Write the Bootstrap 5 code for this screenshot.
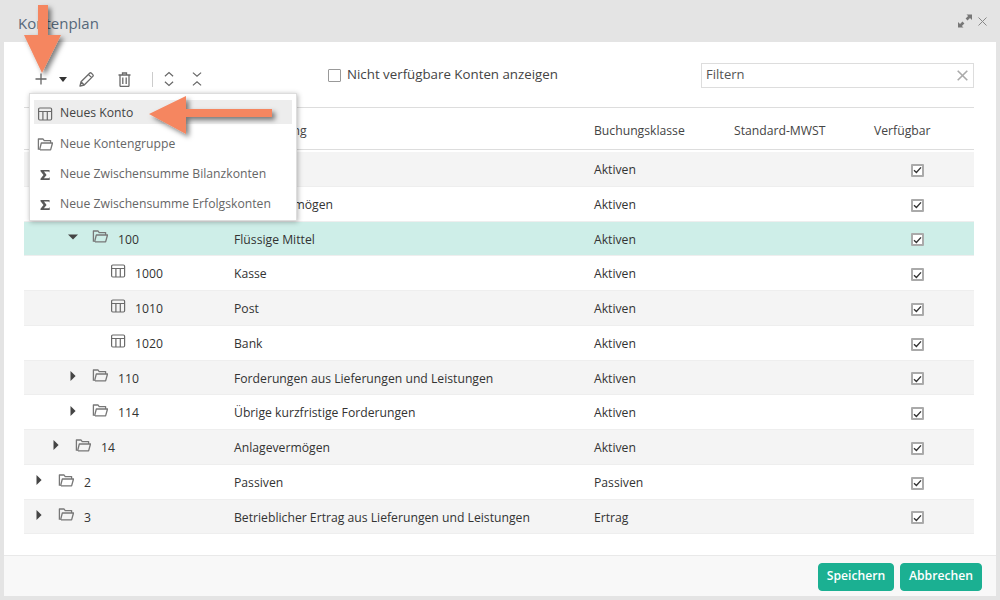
<!DOCTYPE html>
<html lang="de">
  <head>
    <meta charset="UTF-8" />
    <meta name="viewport" content="width=device-width, initial-scale=1.0" />
    <title>Kontenplan</title>
    <link rel="stylesheet" href="https://cdn.jsdelivr.net/npm/bootstrap@5.3.0/dist/css/bootstrap.min.css" />
    <style>
      html, body { height: 100%; overflow: hidden; }
      body {
        background: #e4e4e4;
        color: #333;
        font-family: "Open Sans", "Noto Sans", sans-serif;
        font-size: 12.2px;
        position: relative;
      }
      .win-head { height: 42px; padding: 0 13px 0 18px; }
      .win-title { font-size: 15px; color: #56687a; margin-top: 4px; }
      .win-ctrl { gap: 6px; }
      .win-body { height: 513px; margin: 0 4px; background: #fff; padding: 0 20px; position: relative; }
      .win-foot { height: 41px; margin: 0 4px; background: #f8f8f8; border-top: 1px solid #e9e9e9; padding: 1px 14px 0 0; gap: 6px; }
      .tools { height: 65px; padding-top: 1px; }
      .tool { width: 20px; display: flex; justify-content: center; flex: none; color: #666; margin-top: 8px; }
      .tool-plus { margin-left: 7px; }
      .tool-caret { margin-left: 2px; }
      .tool-pen { margin-left: 3px; }
      .tool-bin { margin-left: 18px; }
      .tool-up { margin-left: 6px; }
      .tool-down { margin-left: 8px; }
      .tool-sep { width: 1px; height: 15px; background: #ccc; flex: none; margin-left: 18px; margin-top: 8px; }
      .show-all { font-size: 13.3px; color: #444; margin-left: 121px; gap: 6px; }
      .fake-check { width: 13px; height: 13px; border: 2px solid #aaa; background: #fff; display: inline-flex; align-items: center; justify-content: center; border-radius: 1px; vertical-align: middle; }
      .show-all .fake-check { border-width: 1px; border-color: #999; }
      .filter-box { width: 273px; height: 25px; border: 1px solid #ddd; padding: 0 3px 0 4px; margin-left: auto; margin-right: 2px; color: #555; font-size: 13px; }
      .filter-clear { margin-right: 2px; }
      table.konten { width: 950px; table-layout: fixed; margin: 0; border-top: 1px solid #ddd; border-collapse: separate; border-spacing: 0; font-size: 12.2px; --bs-table-bg: transparent; color: #333; }
      table.konten th { height: 42px; font-weight: 400; padding: 5px 10px 0; border-bottom: 1px solid #ddd; vertical-align: middle; color: #444; }
      table.konten td { height: 34.75px; padding: 3px 10px 0; border-bottom: 1px solid #eee; vertical-align: middle; }
      table.konten thead::after { content: ""; display: table-row; height: 2px; }
      tr.grey td { background: #f4f4f4; }
      tr.picked td { background: #ceeee8; }
      .tree-cell { display: flex; align-items: center; }
      .tree-cell svg { flex: none; }
      .twist { width: 20px; display: flex; justify-content: center; flex: none; margin-top: -6px; }
      .node-ico { width: 16px; display: flex; flex: none; margin: -6px 10px 0 9px; }
      .acct-ico { width: 16px; display: flex; flex: none; margin-right: 9px; margin-top: -7px; }
      .lvl0 { margin-left: -5px; }
      .lvl1 { margin-left: 12px; }
      .lvl2 { margin-left: 29px; }
      .lvl3 { margin-left: 76px; }
      .check-cell { text-align: center; padding-right: 14px !important; padding-top: 2px !important; }
      .add-menu { display: block; position: absolute; left: 25px; top: 51px; width: 268px; height: 128px; padding: 4px; border: 1px solid #ddd; border-radius: 0; box-shadow: 1px 1px 5px rgba(0,0,0,.3); font-size: 12.2px; z-index: 5; min-width: 0; }
      .add-menu .dropdown-item { height: 30px; display: flex; align-items: center; gap: 7px; padding: 3px 0 0 3px; color: #666; }
      .add-menu .dropdown-item.active { background: #ededed; color: #444; height: 24px; margin: 2px 0 4px; padding-top: 3px; }
      .add-menu .dropdown-item svg { flex: none; width: 16px; }
      .btn-save { --bs-btn-bg: #1bb092; --bs-btn-color: #fff; --bs-btn-border-color: #1bb092; --bs-btn-padding-y: 0; --bs-btn-padding-x: 0; --bs-btn-font-size: 12.2px; --bs-btn-font-weight: 600; --bs-btn-border-radius: 4px; height: 28px; }
      .btn-speichern { width: 76px; }
      .btn-abbrechen { width: 82px; }
      .arrow-over { position: absolute; left: 0; top: 0; pointer-events: none; z-index: 10; overflow: visible; }
    </style>
  </head>
  <body>
    <svg width="0" height="0" class="d-block position-absolute">
      <defs>
        <symbol id="ico-table" viewBox="0 0 16 14">
          <rect x="1.6" y="1" width="13" height="12" rx="1.2" fill="none" stroke="#6a6a6a" stroke-width="1.2" />
          <path d="M1.600 4.500h13M5.900 4.500V13M10.300 4.500V13" stroke="#6a6a6a" stroke-width="1.2" fill="none" />
        </symbol>
        <symbol id="ico-folder" viewBox="0 0 16 13">
          <path d="M1.400 11.800V1h4.700l1.100 1.600h6.400v2.400M3 11.800h10.600l1.900-6.800H4.300L2.600 11.800" fill="none" stroke="#777" stroke-width="1.3" stroke-linejoin="round" />
        </symbol>
        <symbol id="ico-sigma" viewBox="0 0 16 12">
          <path d="M3.500 1h9v2.400L11.500 2.600H7L9.600 6 6.900 9.200h4.700l1.100-1V11H3.500V9.800L6.500 6 3.500 2.200z" fill="#5a5a5a" />
        </symbol>
        <symbol id="twist-right" viewBox="0 0 6 10"><path d="M.5 0 5.600 5 .5 10z" fill="#444" /></symbol>
        <symbol id="twist-down" viewBox="0 0 10 6"><path d="M0 .5h10L5 5.600z" fill="#444" /></symbol>
        <symbol id="tick" viewBox="0 0 9 8"><path d="M1 4.200 3.400 6.400 8 1.400" fill="none" stroke="#333" stroke-width="1.4" /></symbol>
      </defs>
    </svg>

    <div class="win-head d-flex align-items-center justify-content-between">
      <div class="win-title">Kontenplan</div>
      <div class="win-ctrl d-flex align-items-center">
        <svg width="14" height="14" viewBox="0 0 14 14"><path d="M8.500 0.500H14V6L12 4 9.500 6.500 7.600 4.600 10.100 2.100zM5.500 13.500H0V8L2 10 4.500 7.500 6.400 9.400 3.900 11.900z" fill="#777" /></svg>
        <svg width="9" height="9" viewBox="0 0 9 9"><path d="M.5.5l8 8M8.500.5l-8 8" stroke="#888" stroke-width="1" /></svg>
      </div>
    </div>

    <div class="win-body">
      <div class="tools d-flex align-items-center">
        <div class="tool tool-plus">
          <svg width="12" height="12" viewBox="0 0 12 12"><path d="M6 .5v11M.5 6h11" stroke="#666" stroke-width="1.3" /></svg>
        </div>
        <div class="tool tool-caret">
          <svg width="8" height="5" viewBox="0 0 8 5"><path d="M0 0h8L4 5z" fill="#333" /></svg>
        </div>
        <div class="tool tool-pen">
          <svg width="15" height="15" viewBox="0 0 15 15"><path d="M1 14l1-4.200L10.600 1.200a1.300 1.300 0 0 1 1.800 0l1.400 1.400a1.300 1.300 0 0 1 0 1.800L5.200 13zM2 9.800 5.200 13M9.400 2.400l3.200 3.200" fill="none" stroke="#6a6a6a" stroke-width="1.300" stroke-linejoin="round" /></svg>
        </div>
        <div class="tool tool-bin">
          <svg width="13" height="15" viewBox="0 0 13 15"><path d="M.5 3h12M4.500 3V1h4v2M2 3v10.500a1 1 0 0 0 1 1h7a1 1 0 0 0 1-1V3M4.800 5.500v6.500M8.200 5.500v6.500" fill="none" stroke="#6a6a6a" stroke-width="1.300" /></svg>
        </div>
        <div class="tool-sep"></div>
        <div class="tool tool-up">
          <svg width="10" height="16" viewBox="0 0 11 16"><path d="M1 5 5.500 1 10 5M1 11l4.500 4 4.500-4" fill="none" stroke="#666" stroke-width="1.300" /></svg>
        </div>
        <div class="tool tool-down">
          <svg width="10" height="16" viewBox="0 0 11 16"><path d="M1 1l4.500 4L10 1M1 15l4.500-4 4.500 4" fill="none" stroke="#666" stroke-width="1.300" /></svg>
        </div>
        <div class="show-all d-flex align-items-center">
          <span class="fake-check"></span><span>Nicht verfügbare Konten anzeigen</span>
        </div>
        <div class="filter-box d-flex align-items-center justify-content-between">
          <span>Filtern</span>
          <svg width="11" height="11" viewBox="0 0 11 11" class="filter-clear"><path d="M.7.700l9.600 9.600M10.300.700.700 10.300" stroke="#aaa" stroke-width="1.600" /></svg>
        </div>
      </div>

      <ul class="dropdown-menu add-menu list-unstyled">
        <li class="dropdown-item active"><svg height="14"><use href="#ico-table" /></svg>Neues Konto</li>
        <li class="dropdown-item"><svg height="13"><use href="#ico-folder" /></svg>Neue Kontengruppe</li>
        <li class="dropdown-item"><svg height="12"><use href="#ico-sigma" /></svg>Neue Zwischensumme Bilanzkonten</li>
        <li class="dropdown-item"><svg height="12"><use href="#ico-sigma" /></svg>Neue Zwischensumme Erfolgskonten</li>
      </ul>

      <table class="table konten">
        <colgroup><col style="width:200px" /><col style="width:360px" /><col style="width:140px" /><col style="width:140px" /><col style="width:110px" /></colgroup>
        <thead>
          <tr><th>Kontonummer</th><th>Bezeichnung</th><th>Buchungsklasse</th><th>Standard-MWST</th><th>Verfügbar</th></tr>
        </thead>
        <tbody id="rows"></tbody>
      </table>
    </div>

    <div class="win-foot d-flex align-items-center justify-content-end">
      <button class="btn btn-save btn-speichern">Speichern</button>
      <button class="btn btn-save btn-abbrechen">Abbrechen</button>
    </div>

    <svg class="arrow-over" width="1000" height="600" viewBox="0 0 1000 600">
      <defs>
        <filter id="arrow-shadow" x="-30%" y="-30%" width="170%" height="170%">
          <feDropShadow dx="3" dy="3" stdDeviation="2.500" flood-color="#000" flood-opacity=".5" />
        </filter>
      </defs>
      <path d="M38 5h10v30h13L42 73 24 35h14z" fill="#f58660" filter="url(#arrow-shadow)" />
      <path d="M149 114l37-18v13h86v8h-86v17z" fill="#f58660" filter="url(#arrow-shadow)" />
    </svg>

    <script>
      // depth, kind (closed / open / acct), number, name, klasse
      const rows = [
        [0, 'open', '1', 'Aktiven', 'Aktiven'],
        [1, 'open', '10', 'Umlaufvermögen', 'Aktiven'],
        [2, 'open', '100', 'Flüssige Mittel', 'Aktiven'],
        [3, 'acct', '1000', 'Kasse', 'Aktiven'],
        [3, 'acct', '1010', 'Post', 'Aktiven'],
        [3, 'acct', '1020', 'Bank', 'Aktiven'],
        [2, 'closed', '110', 'Forderungen aus Lieferungen und Leistungen', 'Aktiven'],
        [2, 'closed', '114', 'Übrige kurzfristige Forderungen', 'Aktiven'],
        [1, 'closed', '14', 'Anlagevermögen', 'Aktiven'],
        [0, 'closed', '2', 'Passiven', 'Passiven'],
        [0, 'closed', '3', 'Betrieblicher Ertrag aus Lieferungen und Leistungen', 'Ertrag']
      ]
      const tableBody = document.getElementById('rows')
      rows.forEach((r, i) => {
        const row = document.createElement('tr')
        if (i === 2) row.className = 'picked'
        else if (i % 2 === 0) row.className = 'grey'
        let tree
        if (r[1] === 'acct') {
          tree = `<span class="acct-ico"><svg width="16" height="14"><use href="#ico-table" /></svg></span>`
        } else {
          const twist = r[1] === 'open'
            ? `<svg width="10" height="6"><use href="#twist-down" /></svg>`
            : `<svg width="6" height="10"><use href="#twist-right" /></svg>`
          tree = `<span class="twist">${twist}</span><span class="node-ico"><svg width="16" height="13"><use href="#ico-folder" /></svg></span>`
        }
        row.innerHTML = `
          <td><div class="tree-cell lvl${r[0]}">${tree}<span>${r[2]}</span></div></td>
          <td>${r[3]}</td>
          <td>${r[4]}</td>
          <td></td>
          <td class="check-cell"><span class="fake-check"><svg width="9" height="8"><use href="#tick" /></svg></span></td>`
        tableBody.appendChild(row)
      })
    </script>
    <script src="https://cdn.jsdelivr.net/npm/bootstrap@5.3.0/dist/js/bootstrap.bundle.min.js"></script>
  </body>
</html>
